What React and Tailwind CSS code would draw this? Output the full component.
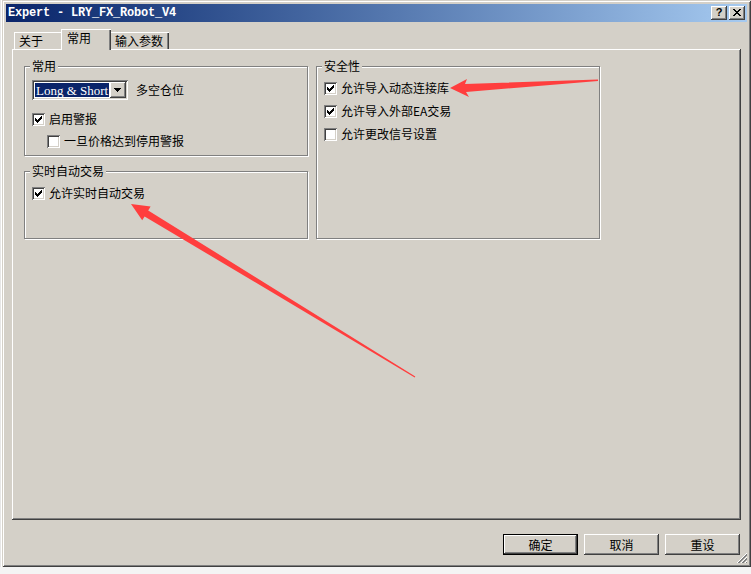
import React from 'react';

const raised = 'shadow-[inset_-1px_-1px_0_#404040,inset_1px_1px_0_#fff,inset_-2px_-2px_0_#808080]';
const sunken = 'shadow-[inset_1px_1px_0_#808080,inset_-1px_-1px_0_#fff,inset_2px_2px_0_#404040,inset_-2px_-2px_0_#d4d0c8]';
const cjk = "font-['SimSun','Noto_Sans_CJK_SC',sans-serif]";

function Check({ checked }) {
  return (
    <div className={`w-[13px] h-[13px] bg-white shrink-0 flex items-center justify-center ${sunken}`}>
      {checked && (
        <svg width="7" height="7" viewBox="0 0 7 7" shapeRendering="crispEdges">
          <path
            fill="#000"
            d="M6 0h1v1h-1z M5 1h2v1h-2z M0 2h1v1h-1z M4 2h3v1h-3z M0 3h2v1h-2z M3 3h3v1h-3z M0 4h5v1h-5z M1 5h3v1h-3z M2 6h1v1h-1z"
          />
        </svg>
      )}
    </div>
  );
}

function CheckRow({ checked, label, className = '' }) {
  return (
    <div className={`flex items-center gap-[4px] h-[13px] ${className}`}>
      <Check checked={checked} />
      <span className="relative -top-[1px] text-[12px] leading-[14px] text-black whitespace-nowrap">{label}</span>
    </div>
  );
}

function Group({ title, className = '', children }) {
  return (
    <div className={`relative border border-[#808080] shadow-[inset_1px_1px_0_#fff,1px_1px_0_#fff] ${className}`}>
      <span className="absolute -top-[8px] left-[5px] px-[2px] bg-[#d4d0c8] text-[12px] leading-[14px] text-black">
        {title}
      </span>
      {children}
    </div>
  );
}

function Button({ label, isDefault }) {
  const cls = isDefault
    ? 'shadow-[inset_0_0_0_1px_#000,inset_-2px_-2px_0_#404040,inset_2px_2px_0_#fff,inset_-3px_-3px_0_#808080]'
    : raised;
  return (
    <div className={`w-[75px] h-[21px] flex items-center justify-center text-[12px] text-black bg-[#d4d0c8] ${cls}`}>
      {label}
    </div>
  );
}

export default function App() {
  return (
    <div className={`w-[751px] h-[574px] bg-[#f4f4f4] flex flex-col overflow-hidden relative ${cjk}`}>
      <div className="flex h-[567px]">
        <div className="w-[2px] bg-[#e6e6e6] border-r border-white" />
        <div className="relative flex-1 flex flex-col bg-[#d4d0c8] p-[4px] shadow-[inset_1px_1px_0_#d4d0c8,inset_-1px_-1px_0_#404040,inset_2px_2px_0_#fff,inset_-2px_-2px_0_#808080]">
          {/* title bar */}
          <div className="h-[18px] flex items-center justify-between bg-linear-to-r from-[#0a246a] to-[#a6caf0] pl-[2px] pr-[2px]">
            <span className="font-['Liberation_Mono',monospace] font-bold text-[12px] tracking-[-0.2px] text-white leading-none">
              Expert - LRY_FX_Robot_V4
            </span>
            <div className="flex gap-[2px]">
              <div className={`w-[16px] h-[14px] bg-[#d4d0c8] flex items-center justify-center ${raised}`}>
                <span className="font-['Liberation_Sans',sans-serif] font-bold text-[11px] leading-none text-black -mt-[1px]">?</span>
              </div>
              <div className={`w-[16px] h-[14px] bg-[#d4d0c8] flex items-center justify-center ${raised}`}>
                <svg width="8" height="7" viewBox="0 0 8 7" shapeRendering="crispEdges" className="-mt-[1px] -ml-[1px]">
                  <path
                    fill="#000"
                    d="M0 0h2v1h-2z M6 0h2v1h-2z M1 1h2v1h-2z M5 1h2v1h-2z M2 2h4v1h-4z M3 3h2v1h-2z M2 4h4v1h-4z M1 5h2v1h-2z M5 5h2v1h-2z M0 6h2v1h-2z M6 6h2v1h-2z"
                  />
                </svg>
              </div>
            </div>
          </div>

          {/* body */}
          <div className="flex-1 flex flex-col px-[6px] pt-[7px]">
            {/* tabs */}
            <div className="relative z-10 flex items-end h-[20px] pl-[2px]">
              <div className="w-[47px] h-[17px] pl-[5px] pt-[2px] text-[12px] leading-[14px] text-black shadow-[inset_1px_1px_0_#fff]">
                关于
              </div>
              <div className="w-[50px] h-[21px] -mb-[1px] pl-[6px] pt-[2px] text-[12px] leading-[14px] text-black bg-[#d4d0c8] shadow-[inset_1px_1px_0_#fff,inset_-1px_0_0_#404040,inset_-2px_0_0_#808080]">
                常用
              </div>
              <div className="w-[58px] h-[17px] pl-[4px] pt-[2px] text-[12px] leading-[14px] text-black shadow-[inset_0_1px_0_#fff,inset_-1px_0_0_#404040,inset_-2px_0_0_#808080]">
                输入参数
              </div>
            </div>

            {/* tab panel */}
            <div className={`h-[471px] pl-[12px] pt-[17px] ${raised}`}>
              <div className="flex gap-[8px] text-black">
                <div className="w-[284px] flex flex-col gap-[15px]">
                  <Group title="常用" className="h-[90px] pl-[7px] pt-[13px]">
                    <div className="flex items-center gap-[8px]">
                      <div className={`w-[96px] h-[20px] bg-white p-[2px] flex ${sunken}`}>
                        <div className="flex-1 flex items-center m-[1px] mr-[1px] bg-[#0a246a] text-white font-['Liberation_Serif',serif] text-[13px] leading-none pl-[1px]">
                          Long &amp; Short
                        </div>
                        <div className={`w-[16px] h-[16px] bg-[#d4d0c8] flex items-center justify-center ${raised}`}>
                          <svg width="7" height="4" viewBox="0 0 7 4" shapeRendering="crispEdges" className="-ml-[1px]">
                            <path fill="#000" d="M0 0h7v1h-7z M1 1h5v1h-5z M2 2h3v1h-3z M3 3h1v1h-1z" />
                          </svg>
                        </div>
                      </div>
                      <span className="text-[12px] leading-[14px]">多空仓位</span>
                    </div>
                    <CheckRow checked label="启用警报" className="mt-[13px]" />
                    <CheckRow label="一旦价格达到停用警报" className="mt-[9px] ml-[15px]" />
                  </Group>
                  <Group title="实时自动交易" className="h-[68px] pl-[7px] pt-[15px]">
                    <CheckRow checked label="允许实时自动交易" />
                  </Group>
                </div>
                <Group title="安全性" className="w-[284px] h-[173px] pl-[7px] pt-[15px] flex flex-col gap-[10px]">
                  <CheckRow checked label="允许导入动态连接库" />
                  <CheckRow checked label="允许导入外部EA交易" />
                  <CheckRow label="允许更改信号设置" />
                </Group>
              </div>
            </div>

            {/* buttons */}
            <div className="flex justify-end gap-[6px] mt-[14px] mr-[1px]">
              <Button label="确定" isDefault />
              <Button label="取消" />
              <Button label="重设" />
            </div>
          </div>

          {/* resize grip */}
          <svg width="12" height="12" viewBox="0 0 12 12" shapeRendering="crispEdges" className="absolute right-[3px] bottom-[3px]">
            <path stroke="#fff" d="M11 1L1 11 M11 5L5 11 M11 9L9 11" />
            <path stroke="#808080" d="M11 2L2 11 M11 3L3 11 M11 6L6 11 M11 7L7 11 M11 10L10 11" />
          </svg>
        </div>
      </div>

      {/* annotation arrows */}
      <svg width="751" height="574" className="absolute left-0 top-0 pointer-events-none">
        <polygon
          fill="#ff3e3e"
          points="450,88 467,79 465,84 598,79.5 598,81 466,92 469,97"
        />
        <polygon
          fill="#ff3e3e"
          points="131,204 150.6,206.6 148.2,210.4 415.3,376.6 414.7,377.4 144.6,216.4 142.2,220.2"
        />
      </svg>
    </div>
  );
}
